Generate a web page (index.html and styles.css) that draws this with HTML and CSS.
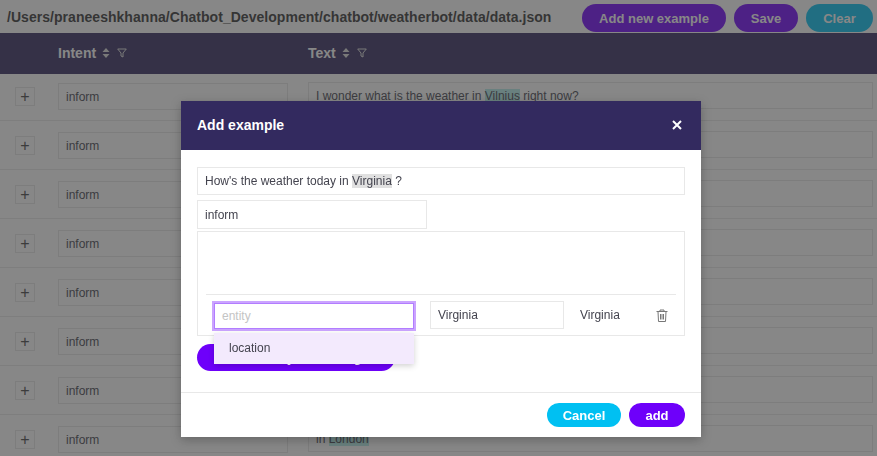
FILE: index.html
```html
<!DOCTYPE html>
<html lang="en">
<head>
<meta charset="utf-8">
<title>Add example</title>
<link rel="stylesheet" href="styles.css">
</head>
<body>
<div class="topbar">
  <div class="path">/Users/praneeshkhanna/Chatbot_Development/chatbot/weatherbot/data/data.json</div>
  <div class="actions">
    <button class="pill violet wide">Add new example</button>
    <button class="pill violet save">Save</button>
    <button class="pill cyan clear">Clear</button>
  </div>
</div>
<div class="thead">
  <div class="th intent-col">Intent
    <svg class="sort" viewBox="0 0 8 12" width="8" height="12"><path d="M4 1l3.500 4h-7zM4 11l3.500-4h-7z"/></svg>
    <svg class="filter" viewBox="0 0 10 10" width="10" height="10"><path d="M.7 1h8.600L6 5v4L4 8V5z"/></svg>
  </div>
  <div class="th text-col">Text
    <svg class="sort" viewBox="0 0 8 12" width="8" height="12"><path d="M4 1l3.500 4h-7zM4 11l3.500-4h-7z"/></svg>
    <svg class="filter" viewBox="0 0 10 10" width="10" height="10"><path d="M.7 1h8.600L6 5v4L4 8V5z"/></svg>
  </div>
</div>
<div class="rows">
  <div class="row"><span class="plus">+</span><div class="field intent-field">inform</div><div class="field text-field">I wonder what is the weather in <mark class="ent">Vilnius</mark> right now?</div></div>
  <div class="row"><span class="plus">+</span><div class="field intent-field">inform</div><div class="field text-field">in <mark class="ent">Paris</mark></div></div>
  <div class="row"><span class="plus">+</span><div class="field intent-field">inform</div><div class="field text-field">in <mark class="ent">Boston</mark></div></div>
  <div class="row"><span class="plus">+</span><div class="field intent-field">inform</div><div class="field text-field">in <mark class="ent">Berlin</mark></div></div>
  <div class="row"><span class="plus">+</span><div class="field intent-field">inform</div><div class="field text-field">in <mark class="ent">Madrid</mark></div></div>
  <div class="row"><span class="plus">+</span><div class="field intent-field">inform</div><div class="field text-field">in <mark class="ent">Oslo</mark></div></div>
  <div class="row"><span class="plus">+</span><div class="field intent-field">inform</div><div class="field text-field">in <mark class="ent">Rome</mark></div></div>
  <div class="row"><span class="plus">+</span><div class="field intent-field">inform</div><div class="field text-field">in <mark class="ent">London</mark></div></div>
</div>

<div class="mask"></div>
<div class="modal">
  <div class="modal-head">
    <span class="modal-title">Add example</span>
    <svg class="close" viewBox="0 0 10 10" width="10" height="10"><path d="M1 1l8 8M9 1l-8 8"/></svg>
  </div>
  <div class="modal-body">
    <div class="box sentence">How's the weather today in <mark class="sel">Virginia</mark> ?</div>
    <div class="box intent-box">inform</div>
    <div class="entities">
      <div class="entity-row">
        <div class="combo">
          <div class="box entity-input">entity</div>
          <div class="dropdown">location</div>
        </div>
        <div class="box value-input">Virginia</div>
        <span class="plain-value">Virginia</span>
        <svg class="trash" viewBox="0 0 12 13" width="12" height="13"><path d="M.5 2.500h11M4 2.500V1h4v1.500M2 2.500l.5 10h7l.5-10M4.500 5v5.500M6 5v5.500M7.500 5v5.500"/></svg>
      </div>
    </div>
    <button class="pill violet create">Add entity for the tag</button>
  </div>
  <div class="modal-foot">
    <button class="pill cyan cancel">Cancel</button>
    <button class="pill violet add">add</button>
  </div>
</div>
</body>
</html>
```
FILE: styles.css
```css
* { box-sizing: border-box; }
html, body { margin: 0; height: 100%; overflow: hidden; }
body { font-family: "Liberation Sans", Arial, sans-serif; font-size: 12px; color: #44444f; background: #fff; }

.topbar { height: 33px; display: flex; align-items: center; justify-content: space-between; padding: 0 4px 0 7px; background: #fff; }
.path { font-size: 14px; font-weight: 700; color: #333; letter-spacing: .04px; white-space: nowrap; }
.actions { display: flex; gap: 8px; padding-top: 3px; }
.pill { border: 0; border-radius: 14px; padding: 0; font-family: inherit; font-size: 13px; font-weight: 700; color: #fff; text-align: center; }
.cyan { background: #00c0f2; }
.violet { background: #6e00fa; }
.wide { width: 144px; height: 28px; }
.save { width: 64px; height: 28px; }
.clear { width: 67px; height: 28px; }

.thead { position: relative; z-index: 1; height: 41px; background: #332a5f; display: flex; align-items: center; padding: 0 0 1px 58px; }
.th { color: #fff; font-size: 14px; font-weight: 700; display: flex; align-items: center; }
.intent-col { width: 250px; }
.sort { margin-left: 6px; fill: #ddd; }
.filter { margin-left: 7px; fill: none; stroke: #ddd; stroke-width: 1; }

.rows { margin-top: -2px; }
.row { height: 49px; border-bottom: 1px solid #e8e8e8; display: flex; align-items: center; padding: 1px 4px 0 15px; background: #fff; }
.plus { width: 20px; height: 19px; border: 1px solid #e6e6e6; display: flex; align-items: center; justify-content: center; font-size: 16px; line-height: 1; color: #444; margin-right: 23px; flex: none; }
.field { height: 27px; border: 1px solid #e6e6e6; padding: 0 7px; display: flex; align-items: center; white-space: pre; flex: none; }
.intent-field { width: 230px; margin-right: 20px; }
.text-field { width: 565px; margin-top: -2px; }
.ent { background: #b4eeea; color: inherit; }

.mask { position: fixed; inset: 0; z-index: 2; background: rgba(55, 55, 55, .6); }

.modal { position: fixed; left: 181px; top: 101px; z-index: 3; width: 520px; height: 336px; background: #fff; box-shadow: 0 3px 10px rgba(0, 0, 0, .25); display: flex; flex-direction: column; }
.modal-head { height: 49px; flex: none; background: #332a5f; display: flex; align-items: center; justify-content: space-between; padding: 0 19px 2px 16px; }
.modal-title { color: #fff; font-size: 14px; font-weight: 700; }
.close { fill: none; stroke: #fff; stroke-width: 2; }

.modal-body { flex: 1; padding: 17px 16px 0; display: flex; flex-direction: column; align-items: flex-start; border-bottom: 1px solid #e8e8e8; }
.box { height: 28px; border: 1px solid #e8e8e8; padding: 0 7px; display: flex; align-items: center; white-space: pre; background: #fff; }
.sentence { width: 488px; }
.sel { background: #e0e0e0; color: inherit; }
.intent-box { width: 230px; height: 29px; margin-top: 5px; }

.entities { width: 488px; height: 105px; margin-top: 2px; border: 1px solid #e8e8e8; padding: 62px 8px 0; position: relative; z-index: 1; }
.entity-row { height: 41px; border-top: 1px solid #e8e8e8; display: flex; align-items: center; padding: 0 0 0 8px; }
.combo { position: relative; width: 200px; flex: none; margin-right: 16px; }
.entity-input { width: 200px; height: 26px; margin-top: 1px; color: #c4c4c4; outline: 2px solid #cba4ff; border: 1px solid #b27dff; }
.dropdown { position: absolute; left: 0; top: 31px; width: 200px; height: 31px; padding: 0 15px; display: flex; align-items: center; background: #f3eafd; box-shadow: 0 2px 6px rgba(0, 0, 0, .18); z-index: 2; }
.value-input { width: 134px; margin-right: 16px; }
.plain-value { width: 76px; }
.trash { fill: none; stroke: #777; stroke-width: 1; }

.create { width: 198px; height: 27px; margin-top: 8px; }

.modal-foot { height: 44px; flex: none; display: flex; justify-content: flex-end; align-items: center; gap: 8px; padding: 0 16px 0 0; }
.cancel { width: 74px; height: 24px; }
.add { width: 56px; height: 24px; }
```
